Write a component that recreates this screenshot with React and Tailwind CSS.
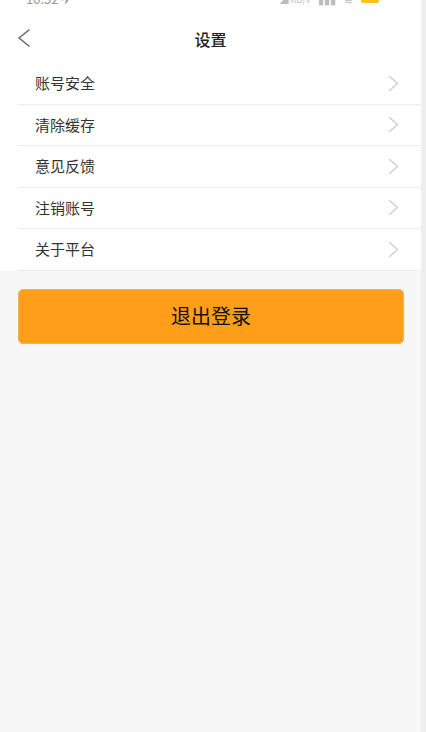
const items = ['账号安全', '清除缓存', '意见反馈', '注销账号', '关于平台']

function StatusBar() {
    return (
        <div className="h-[15px] overflow-hidden relative bg-white">
            <div className="absolute left-[26px] -top-[11px] text-[13px] text-[#999]">10:52 ✈</div>
            <div className="absolute right-[42px] -top-[9px] flex items-center gap-[8px] text-[9px] text-[#bbb]">
                <span>◢ KB/s</span>
                <span className="text-[11px]">▮▮▮</span>
                <span className="text-[11px]">≋</span>
                <span className="w-[18px] h-[8px] rounded-[2px] bg-[#ffc21a]" />
            </div>
        </div>
    )
}

export default function App() {
    return (
        <div className="w-[426px] h-[732px] flex bg-[#eeeeee]" style={{ fontFamily: '"Noto Sans CJK SC", "Noto Sans", sans-serif' }}>
            <div className="w-[421px] flex flex-col bg-[#f7f7f7]">
                <div className="bg-white">
                    <StatusBar />
                    <div className="h-[47px] flex items-center relative">
                        <svg className="absolute left-[16px] top-[13px]" width="16" height="20" viewBox="0 0 16 20">
                            <path d="M13 2 L3 10 L13 18" fill="none" stroke="#666" strokeWidth="1.6" strokeLinecap="round" strokeLinejoin="round" />
                        </svg>
                        <div className="flex-1 text-center text-[16px] font-medium text-[#222]">设置</div>
                    </div>
                </div>
                <div className="bg-white pt-[1px]">
                    {items.map((t, i) => (
                        <div key={i} className="ml-[18px] h-[41.5px] border-b border-[#ededed] flex items-center justify-between pl-[17px] pr-[22px]">
                            <span className="text-[15px] text-[#333]">{t}</span>
                            <svg width="11" height="17" viewBox="0 0 11 17">
                                <path d="M1.5 1.5 L9.5 8.5 L1.5 15.5" fill="none" stroke="#cdcdcd" strokeWidth="1.3" strokeLinecap="round" strokeLinejoin="round" />
                            </svg>
                        </div>
                    ))}
                </div>
                <div className="px-[18px] pt-[18px]">
                    <button className="w-[386px] h-[55px] rounded-[5px] bg-[#ff9f19] border border-[#f0b45a] flex items-center justify-center text-[20px] text-[#111]">
                        退出登录
                    </button>
                </div>
            </div>
        </div>
    )
}
